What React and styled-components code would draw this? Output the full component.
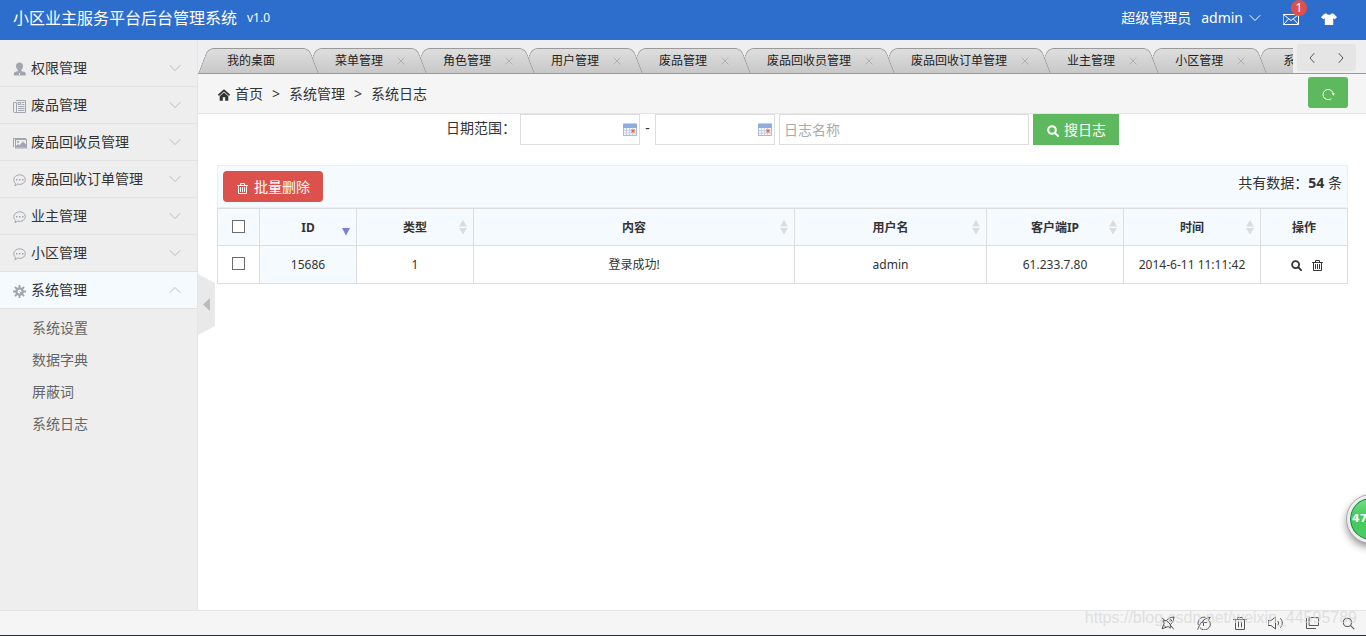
import React from "react";
import styled, { createGlobalStyle, css } from "styled-components";

const GlobalStyle = createGlobalStyle`
  *, *::before, *::after { box-sizing: border-box; }
  body {
    margin: 0;
    font: 14px/20px "Noto Sans", "Noto Sans CJK SC", sans-serif;
    color: #333;
    background: #fff;
  }
  button, input { font: inherit; color: inherit; margin: 0; padding: 0; border: 0; background: none; border-radius: 0; }
  button { cursor: pointer; }
  a { color: inherit; text-decoration: none; }
  ul, ol { list-style: none; margin: 0; padding: 0; }
  svg { display: block; flex: none; }
`;

/* ---------- icons ---------- */

const Line = ({ size = 14, width, height, box = "0 0 14 14", stroke = 1, children, ...rest }) => (
  <svg width={width || size} height={height || size} viewBox={box} fill="none" stroke="currentColor"
    strokeWidth={stroke} strokeLinecap="round" strokeLinejoin="round" aria-hidden="true" {...rest}>
    {children}
  </svg>
);

const ChevronDown = () => <Line width={12} height={8} box="0 0 12 8"><path d="M1 1.5 6 6.5 11 1.5" /></Line>;
const ChevronUp = () => <Line width={12} height={8} box="0 0 12 8"><path d="M1 6.5 6 1.5 11 6.5" /></Line>;
const ChevronLeft = () => <Line width={6} height={10} box="0 0 6 10"><path d="M5 .5 1 5 5 9.5" /></Line>;
const ChevronRight = () => <Line width={6} height={10} box="0 0 6 10"><path d="M1 .5 5 5 1 9.5" /></Line>;
const Cross = () => <Line width={8} height={8} box="0 0 8 8"><path d="M.8.8 7.2 7.2M7.2.8.8 7.2" /></Line>;

const UserIcon = () => (
  <svg width="13" height="14" viewBox="0 0 13 14" fill="currentColor" aria-hidden="true">
    <path d="M6.5.5C8.600.5 10 1.900 10 4c0 1.700-.7 3.100-1.700 3.900v1.100l3.200 1c.9.3 1.200 1 1.200 2.100v1.400H.8v-1.400c0-1.100.3-1.800 1.200-2.100l2.900-1V7.900C3.800 7.100 3 5.700 3 4 3 1.900 4.400.5 6.500.5Z" />
    <path d="M6.500 11v2" stroke="#eee" strokeWidth="1" />
  </svg>
);
const NewsIcon = () => (
  <Line width={13} height={13} box="0 0 13 13">
    <path d="M3.500.500h9v12h-11a1 1 0 0 1-1-1v-9h3v9M5.500 2.500h2v2h-2zM9 2.500h2M9 4.500h2M5.500 6.500h5.500M5.500 8.500h5.500M5.500 10.500h5.500" />
  </Line>
);
const PictureIcon = () => (
  <svg width="14" height="12" viewBox="0 0 14 12" aria-hidden="true">
    <path d="M.5 10V1.500h12.500" fill="none" stroke="currentColor" />
    <rect x="2.500" y="2.500" width="11" height="8.500" fill="none" stroke="currentColor" />
    <circle cx="5" cy="5" r="1.100" fill="currentColor" />
    <path d="M3 10.500V9l2-2 1.500 1.200L10 4.500l3 3v3Z" fill="currentColor" />
  </svg>
);
const ChatIcon = () => (
  <svg width="13" height="13" viewBox="0 0 13 13" aria-hidden="true">
    <path d="M6.700.8C9.900.8 12.300 2.800 12.300 5.600S9.900 10.400 6.700 10.400c-.8 0-1.500-.1-2.200-.3L2 11.900l.4-2.700C1.300 8.300.8 7.100.8 5.600.8 2.800 3.500.8 6.700.8Z" fill="none" stroke="currentColor" />
    <path d="M3 5h1.500v1.500H3zM6 5h1.500v1.500H6zM9 5h1.500v1.500H9z" fill="currentColor" />
  </svg>
);
const GearIcon = () => (
  <svg width="13" height="13" viewBox="0 0 13 13" fill="none" stroke="currentColor" aria-hidden="true">
    <circle cx="6.500" cy="6.500" r="3.100" strokeWidth="2.400" />
    <path d="M6.500 0v3M6.500 10v3M0 6.500h3M10 6.500h3M1.900 1.900l2.100 2.100M9 9l2.100 2.100M11.100 1.900 9 4M4 9l-2.100 2.100" strokeWidth="1.800" />
    <path d="M6.500 6.500 8.500 8.500" />
  </svg>
);
const MailIcon = () => (
  <Line width={16} height={11} box="0 0 16 11">
    <path d="M.5.500h15v10H.5zM1 1l7 5.500L15 1M1 10l4.500-5M15 10l-4.500-5" />
  </Line>
);
const ShirtIcon = () => (
  <svg width="16" height="12" viewBox="0 0 16 12" fill="currentColor" aria-hidden="true">
    <path d="M5.200.3c.6 1 1.600 1.500 2.800 1.500S10.200 1.300 10.800.3l2.100.7L16 4.300l-2.300 2-1.500-1.100V12H3.800V5.200L2.300 6.300 0 4.300 3.100 1Z" />
  </svg>
);
const HomeIcon = () => (
  <svg width="12" height="12" viewBox="0 0 12 12" aria-hidden="true">
    <path d="M.5 6.300 6 1.300l5.500 5" fill="none" stroke="currentColor" strokeWidth="1.700" />
    <path d="M1.700 7.300 6 3.500l4.300 3.800v4.400H7.200V8.200H4.800v3.500H1.700Z" fill="currentColor" />
  </svg>
);
const RefreshIcon = () => (
  <Line size={13} box="0 0 13 13">
    <path d="M9 11A5.200 5.200 0 1 1 11.400 6" />
    <path d="M9.600 5.500H13l-1.600 2.200Z" fill="currentColor" stroke="none" />
  </Line>
);
const SearchIcon = ({ size = 12, stroke = 2 }) => (
  <Line size={size} box="0 0 12 12" stroke={stroke}>
    <circle cx="5" cy="5" r="3.800" /><path d="m8 8 3 3" />
  </Line>
);
const TrashIcon = ({ size = 11 }) => (
  <Line size={size} box="0 0 11 11">
    <path d="M.5 2.500h10M3.500 2.300V.5h4v1.800M1.500 2.800v7.700h8V2.800M3.500 4.500v4M5.500 4.500v4M7.500 4.500v4" />
  </Line>
);
const CalendarIcon = () => (
  <svg width="14" height="13" viewBox="0 0 14 13" aria-hidden="true">
    <rect width="14" height="2" rx="1" fill="#cfcdc8" />
    <rect y="1" width="14" height="12" fill="#a9bbdf" />
    <rect y="1" width="14" height="4" fill="#8facdf" />
    <path d="M1 5h12v7H1z" fill="#f3f6fc" />
    <path d="M1 7.500h12M1 10h12M3.500 5v7M6.500 5v7M9.500 5v7" stroke="#c6d2ea" />
    <path d="M8 6h4v4H8z" fill="#f0a58c" />
    <path d="M9 7h2v2H9z" fill="#ea6a48" />
  </svg>
);
const RocketIcon = () => (
  <Line>
    <path d="M12.800 1.200c-2.800-.2-5.300.7-7.300 3.500l-3.700.1L3.300 7 1 12.800 7.200 10.500l2 1.700.2-3.800c2.500-1.800 3.600-4.200 3.400-7.200ZM5.500 4.700l3.900 3.700M3 9.500l1.800 1.800M1 2l3 2.500M12.500 13 9.300 9" />
    <circle cx="9.500" cy="4.500" r="1" />
  </Line>
);
const BoostIcon = () => (
  <Line>
    <path d="M1.200 8.500A5.800 5.800 0 0 1 8 1.200M12.800 5.500A5.900 5.900 0 0 1 3 11.800M.8 13.200C2.500 8 6 2.500 13 1.200M12.800 1.500 11.500 4.500M4.500 6.500h5M6.500 4.500v5" />
  </Line>
);
const BinIcon = () => (
  <Line><path d="M.5 3.500h13M4.500 3.500v-2h5v2M2.500 3.500v10h9v-10M5.500 6v5M8.500 6v5" /></Line>
);
const SpeakerIcon = () => (
  <Line width={16} box="0 0 16 14">
    <path d="M.5 4.500h2.500L7.500 1v12L3 9.500H.5zM10 5.200c.9 1 .9 2.600 0 3.600M12.500 2.500c2.500 2.500 2.500 6.500 0 9" />
  </Line>
);
const WindowsIcon = () => (
  <Line><path d="M4.500 1.500h9v8h-9zM1.500 2.500v10h9" /></Line>
);

/* ---------- page frame ---------- */

const Page = styled.div`
  position: relative;
  display: flex;
  flex-direction: column;
  min-height: 100vh;
  overflow: hidden;
`;

const Header = styled.header`
  display: flex;
  align-items: center;
  height: 40px;
  padding: 0 29px 4px 13px;
  color: #fff;
  background: #2d6dcc;
`;
const Title = styled.a` font-size: 16px; line-height: 24px; `;
const Version = styled.span` margin-left: 10px; font-size: 12px; `;
const UserBar = styled.div` display: flex; align-items: center; margin-left: auto; `;
const UserMenu = styled.button`
  display: flex;
  align-items: center;
  gap: 6px;
  margin-left: 10px;
`;
const HeaderButton = styled.button`
  position: relative;
  margin-left: 22px;
  padding-top: 2px;
`;
const Badge = styled.span`
  position: absolute;
  top: -12px;
  right: -8px;
  width: 16px;
  height: 16px;
  border-radius: 8px;
  font-size: 12px;
  line-height: 16px;
  text-align: center;
  background: #dd514c;
`;

const Body = styled.div` display: flex; flex: 1; `;

/* ---------- sidebar ---------- */

const Sidebar = styled.nav`
  flex: none;
  width: 198px;
  padding-top: 10px;
  border-right: 1px solid #e5e5e5;
  background: #eee;
`;
const GroupButton = styled.button`
  display: flex;
  align-items: center;
  width: 100%;
  height: 37px;
  padding: 0 16px 0 13px;
  border-bottom: 1px solid #e3e3e3;
  text-align: left;
  background: ${(p) => (p.$open ? "#f5fafe" : "transparent")};
`;
const GroupIcon = styled.span`
  display: flex;
  width: 18px;
  padding-top: 2px;
  color: #a0a5b0;
`;
const GroupArrow = styled.span` margin-left: auto; color: #bbb; `;
const SubList = styled.ul` padding: 3px 0; `;
const SubLink = styled.a`
  display: block;
  padding-left: 32px;
  line-height: 32px;
  color: #666;
`;

/* ---------- tab strip ---------- */

const Main = styled.main` position: relative; flex: 1; min-width: 0; `;
const TabBar = styled.div`
  display: flex;
  height: 34px;
  padding-right: 10px;
  border-bottom: 1px solid #999;
  background: #efeef0;
`;
const TabList = styled.ul`
  display: flex;
  flex: 1;
  align-items: flex-end;
  min-width: 0;
  overflow: hidden;
`;
const tabFace = css`
  content: "";
  position: absolute;
  z-index: -1;
  top: 0;
  bottom: 0;
  border-top: 1px solid #999;
  background: linear-gradient(#dedede, #c8c8c9);
`;
const Tab = styled.li`
  position: relative;
  isolation: isolate;
  z-index: ${(p) => p.$depth};
  display: flex;
  flex: none;
  align-items: center;
  gap: 14px;
  height: 25px;
  padding: 1px 9px 0 29px;
  font-size: 12px;
  &::before {
    ${tabFace}
    left: 5px;
    right: 30px;
    border-left: 1px solid #999;
    border-top-left-radius: 6px;
    transform: skewX(-21deg);
  }
  &::after {
    ${tabFace}
    left: 30px;
    right: -8px;
    border-right: 1px solid #999;
    border-top-right-radius: 6px;
    transform: skewX(21deg);
  }
`;
const TabLabel = styled.button`
  line-height: 24px;
  margin-right: ${(p) => (p.$fixed ? "22px" : "0")};
  color: #222;
`;
const TabClose = styled.button` color: #a9b2b8; `;
const TabNav = styled.div`
  display: flex;
  align-items: center;
  justify-content: space-between;
  width: 59px;
  height: 27px;
  margin: 4px 0 0 4px;
  padding: 0 12px;
  border-radius: 3px;
  color: #555;
  background: #e5e5e5;
`;

/* ---------- breadcrumb ---------- */

const CrumbBar = styled.div`
  display: flex;
  align-items: center;
  height: 40px;
  padding: 0 18px 0 20px;
  border-bottom: 1px solid #e5e5e5;
  background: #f5f5f5;
`;
const Crumbs = styled.ol`
  display: flex;
  align-items: center;
  li { display: flex; align-items: center; gap: 5px; }
  li + li::before { content: ">"; margin: 0 4px 0 9px; }
  svg { margin-top: 2px; }
`;
const RefreshButton = styled.button`
  display: flex;
  align-items: center;
  justify-content: center;
  width: 40px;
  height: 31px;
  margin-top: -2px;
  margin-left: auto;
  padding-top: 4px;
  border-radius: 3px;
  color: #fff;
  background: #5eb95e;
`;

/* ---------- search form ---------- */

const Content = styled.div` padding: 0 18px 20px 19px; `;
const SearchForm = styled.form`
  display: flex;
  justify-content: center;
  gap: 4px;
  line-height: 28px;
`;
const Dash = styled.span` width: 7px; text-align: center; `;
const DateField = styled.span`
  position: relative;
  svg { position: absolute; top: 9px; right: 3px; }
`;
const TextInput = styled.input`
  display: block;
  width: ${(p) => p.$width}px;
  height: 31px;
  padding: 0 4px;
  border: 1px solid #ddd;
  background: #fff;
  &::placeholder { color: #aaa; opacity: 1; }
`;
const ActionButton = styled.button`
  display: flex;
  align-items: center;
  gap: ${(p) => (p.$danger ? "6px" : "5px")};
  height: 31px;
  padding: 0 13px 0 14px;
  line-height: 31px;
  color: #fff;
  border-radius: ${(p) => (p.$danger ? "4px" : "0")};
  background: ${(p) => (p.$danger ? "#dd514c" : "#5eb95e")};
  svg { margin-top: 3px; }
`;

/* ---------- table ---------- */

const Toolbar = styled.div`
  display: flex;
  justify-content: space-between;
  align-items: flex-start;
  height: 43px;
  margin-top: 20px;
  padding: 5px;
  border: 1px solid #eee;
  line-height: 24px;
  background: #f5fafe;
`;
const Table = styled.table`
  width: 100%;
  border-collapse: collapse;
  table-layout: fixed;
  font-size: 12px;
`;
const cell = css`
  padding: 0 8px;
  border: 1px solid #ddd;
  text-align: center;
`;
const Th = styled.th`
  ${cell}
  position: relative;
  height: 37px;
  padding-top: 1px;
  width: ${(p) => (p.$width ? `${p.$width}px` : "auto")};
  background: #f5fafe;
`;
const Td = styled.td`
  ${cell}
  height: 38px;
  background: ${(p) => (p.$sorted ? "#f5fafe" : "#fff")};
`;
const SortMark = styled.span`
  position: absolute;
  top: 11px;
  right: 6px;
  color: ${(p) => (p.$active ? "#7c7fe0" : "#dcdcdc")};
`;
const Checkbox = styled.input`
  appearance: none;
  display: block;
  width: 13px;
  height: 13px;
  margin: 0 auto 2px;
  border: 1px solid #6b6b6b;
  background: #fff;
  &:checked { background: #2d6dcc; }
`;
const RowActions = styled.div`
  display: flex;
  justify-content: center;
  gap: 10px;
  padding: 2px 0 0 5px;
`;

/* ---------- overlays and footer ---------- */

const CollapseHandle = styled.button`
  position: absolute;
  left: 0;
  top: 50%;
  margin-top: -51px;
`;
const SpeedBall = styled.div`
  position: absolute;
  right: -29px;
  top: 495px;
  width: 48px;
  height: 48px;
  padding-left: 2px;
  border: 3px solid #eee;
  border-radius: 50%;
  outline: 1px solid #aaa;
  box-shadow: inset 0 0 0 1px #16804a, 0 4px 9px #888;
  font: bold 11px/42px "DejaVu Sans", sans-serif;
  color: #fff;
  background: linear-gradient(#7ade84, #43c85c 45%, #4fcc62);
`;
const Footer = styled.footer`
  position: relative;
  display: flex;
  justify-content: flex-end;
  align-items: center;
  gap: 22px;
  height: 26px;
  padding: 0 11px 0 0;
  border-top: 1px solid #e5e5e5;
  border-bottom: 1px solid #222c33;
  color: #555;
  background: #f5f5f5;
`;
const FooterButton = styled.button`
  display: flex;
  justify-content: center;
  width: 14px;
`;
const Watermark = styled.span`
  position: absolute;
  right: 9px;
  top: -3px;
  font: 16px/20px "Liberation Sans", sans-serif;
  color: rgba(215, 215, 215, 0.75);
  pointer-events: none;
`;

const GROUPS = [
  ["权限管理", UserIcon], ["废品管理", NewsIcon], ["废品回收员管理", PictureIcon],
  ["废品回收订单管理", ChatIcon], ["业主管理", ChatIcon], ["小区管理", ChatIcon],
  ["系统管理", GearIcon, ["系统设置", "数据字典", "屏蔽词", "系统日志"]],
];
const TABS = ["我的桌面", "菜单管理", "角色管理", "用户管理", "废品管理", "废品回收员管理",
  "废品回收订单管理", "业主管理", "小区管理", "系统日志"];
const COLUMNS = [["ID", 97, "desc"], ["类型", 117, "both"], ["内容", 0, "both"], ["用户名", 192, "both"],
  ["客户端IP", 137, "both"], ["时间", 137, "both"], ["操作", 87, null]];
const ROW = ["15686", "1", "登录成功!", "admin", "61.233.7.80", "2014-6-11 11:11:42"];
const TOOLS = [["加速", RocketIcon], ["提速", BoostIcon], ["清理", BinIcon], ["声音", SpeakerIcon],
  ["窗口", WindowsIcon], ["查找", () => <SearchIcon size={13} stroke={1} />]];

const Sort = ({ order }) => (
  <SortMark $active={order === "desc"}>
    <svg width="8" height="16" viewBox="0 0 8 16" fill="currentColor" aria-hidden="true">
      {order === "both" && <path d="M4 0 8 6.500H0Z" />}
      {order === "both" ? <path d="M0 8h8L4 14.500Z" /> : <path d="M0 8h8L4 15.500Z" />}
    </svg>
  </SortMark>
);

export default function App() {
  return (
    <Page>
      <GlobalStyle />
      <Header>
        <Title href="#">小区业主服务平台后台管理系统</Title>
        <Version>v1.0</Version>
        <UserBar>
          <span>超级管理员</span>
          <UserMenu>admin <ChevronDown /></UserMenu>
          <HeaderButton aria-label="消息"><MailIcon /><Badge>1</Badge></HeaderButton>
          <HeaderButton aria-label="换肤"><ShirtIcon /></HeaderButton>
        </UserBar>
      </Header>

      <Body>
        <Sidebar>
          {GROUPS.map(([name, Icon, children]) => (
            <React.Fragment key={name}>
              <GroupButton $open={!!children} aria-expanded={!!children}>
                <GroupIcon><Icon /></GroupIcon>
                {name}
                <GroupArrow>{children ? <ChevronUp /> : <ChevronDown />}</GroupArrow>
              </GroupButton>
              {children && (
                <SubList>
                  {children.map((c) => <li key={c}><SubLink href="#">{c}</SubLink></li>)}
                </SubList>
              )}
            </React.Fragment>
          ))}
        </Sidebar>

        <Main>
          <TabBar>
            <TabList>
              {TABS.map((t, i) => (
                <Tab key={t} $depth={TABS.length - i}>
                  <TabLabel $fixed={i === 0}>{t}</TabLabel>
                  {i > 0 && <TabClose aria-label={`关闭${t}`}><Cross /></TabClose>}
                </Tab>
              ))}
            </TabList>
            <TabNav>
              <button aria-label="向左"><ChevronLeft /></button>
              <button aria-label="向右"><ChevronRight /></button>
            </TabNav>
          </TabBar>

          <CrumbBar>
            <Crumbs>
              <li><HomeIcon /><a href="#">首页</a></li>
              <li>系统管理</li>
              <li>系统日志</li>
            </Crumbs>
            <RefreshButton aria-label="刷新"><RefreshIcon /></RefreshButton>
          </CrumbBar>

          <Content>
            <SearchForm onSubmit={(e) => e.preventDefault()}>
              <label htmlFor="from">日期范围：</label>
              <DateField><TextInput id="from" $width={120} /><CalendarIcon /></DateField>
              <Dash>-</Dash>
              <DateField><TextInput aria-label="结束日期" $width={120} /><CalendarIcon /></DateField>
              <TextInput aria-label="日志名称" placeholder="日志名称" $width={250} />
              <ActionButton><SearchIcon />搜日志</ActionButton>
            </SearchForm>

            <Toolbar>
              <ActionButton $danger type="button"><TrashIcon />批量删除</ActionButton>
              <span>共有数据：<strong>54</strong> 条</span>
            </Toolbar>
            <Table>
              <thead>
                <tr>
                  <Th $width={42}><Checkbox type="checkbox" aria-label="全选" /></Th>
                  {COLUMNS.map(([name, width, order]) => (
                    <Th key={name} $width={width}>{name}{order && <Sort order={order} />}</Th>
                  ))}
                </tr>
              </thead>
              <tbody>
                <tr>
                  <Td><Checkbox type="checkbox" aria-label="选择15686" /></Td>
                  {ROW.map((v, i) => <Td key={v} $sorted={i === 0}>{v}</Td>)}
                  <Td>
                    <RowActions>
                      <button aria-label="查看"><SearchIcon size={11} /></button>
                      <button aria-label="删除"><TrashIcon /></button>
                    </RowActions>
                  </Td>
                </tr>
              </tbody>
            </Table>
          </Content>

          <CollapseHandle aria-label="收起菜单">
            <svg width="17" height="61" viewBox="0 0 17 61" aria-hidden="true">
              <path d="M0 0 17 9v43L0 61Z" fill="#e9e9e9" />
              <path d="M12 24v13L5 30.500Z" fill="#bbb" />
            </svg>
          </CollapseHandle>
        </Main>
      </Body>

      <Footer>
        <Watermark>https://blog.csdn.net/weixin_44595789</Watermark>
        {TOOLS.map(([name, Icon]) => <FooterButton key={name} aria-label={name}><Icon /></FooterButton>)}
      </Footer>
      <SpeedBall>47</SpeedBall>
    </Page>
  );
}
